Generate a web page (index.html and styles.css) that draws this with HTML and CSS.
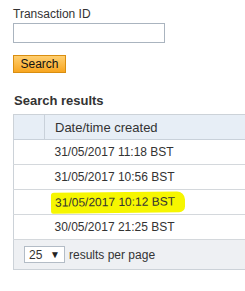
FILE: index.html
```html
<!DOCTYPE html>
<html lang="en">
<head>
  <meta charset="UTF-8">
  <title>Transactions</title>
  <link rel="stylesheet" href="styles.css">
</head>
<body>
  <form class="search-form">
    <label for="txid">Transaction ID</label>
    <input type="text" id="txid" name="txid">
    <button type="submit">Search</button>
  </form>

  <h3 class="results-title">Search results</h3>
  <table class="results">
    <thead>
      <tr><th class="sel"></th><th>Date/time created</th></tr>
    </thead>
    <tbody>
      <tr><td class="sel"></td><td>31/05/2017 11:18 BST</td></tr>
      <tr><td class="sel"></td><td>31/05/2017 10:56 BST</td></tr>
      <tr><td class="sel"></td><td><span class="marker">31/05/2017 10:12 BST</span></td></tr>
      <tr><td class="sel"></td><td>30/05/2017 21:25 BST</td></tr>
    </tbody>
    <tfoot>
      <tr><td colspan="2">
        <div class="pager">
          <span class="page-size"><span>25</span><span class="arrow">&#9660;</span></span>
          <span>results per page</span>
        </div>
      </td></tr>
    </tfoot>
  </table>
</body>
</html>
```

FILE: styles.css
```css
body { margin: 0; padding: 7px 0 0 13px; font-family: "Liberation Sans", Arial, sans-serif; color: #333; background: #fff; overflow: hidden; }
.search-form { display: flex; flex-direction: column; align-items: flex-start; }
label { font-size: 12px; line-height: 14px; }
input { margin: 2px 0 0; width: 152px; height: 20px; box-sizing: border-box; border: 1px solid #aab4bf; padding: 2px 4px; font: 12px "Liberation Sans", Arial, sans-serif; }
button { margin-top: 12px; width: 53px; height: 18px; padding: 0; border: 1px solid #d98e10; background: linear-gradient(#ffcf70, #f8a620); color: #111; font: 12px/16px "Liberation Sans", Arial, sans-serif; cursor: pointer; }
.results-title { margin: 20px 0 6px 1px; font-size: 13px; line-height: 15px; font-weight: bold; color: #333; }
.results { width: 232px; border-collapse: collapse; border: 1px solid #ccd2d8; border-right: none; font-size: 12px; }
.results th { height: 24px; padding: 0 0 0 10px; text-align: left; font-weight: normal; font-size: 13px; background: #e7eef6; border-bottom: 1px solid #c9d1da; }
.results th.sel { width: 20px; border-right: 1px solid #c9d1da; }
.results td { height: 24px; padding: 0 0 0 10px; border-bottom: 1px solid #d4d8dc; white-space: nowrap; }
.results td.sel { width: 20px; }
.marker { display: inline-block; margin-left: -4px; padding: 3px 10px 4px 4px; background: #f6f600; border-radius: 3px 8px 6px 2px; transform: rotate(-0.6deg); }
.results tfoot td { height: 29px; padding: 0 0 0 10px; background: #eef0f3; border-bottom: none; }
.pager { display: flex; align-items: center; gap: 4px; }
.page-size { display: inline-flex; align-items: center; justify-content: space-between; width: 41px; height: 17px; box-sizing: border-box; padding: 0 4px; background: #fff; border: 1px solid #b3bcc6; }
.arrow { font-size: 10px; color: #222; }
```
